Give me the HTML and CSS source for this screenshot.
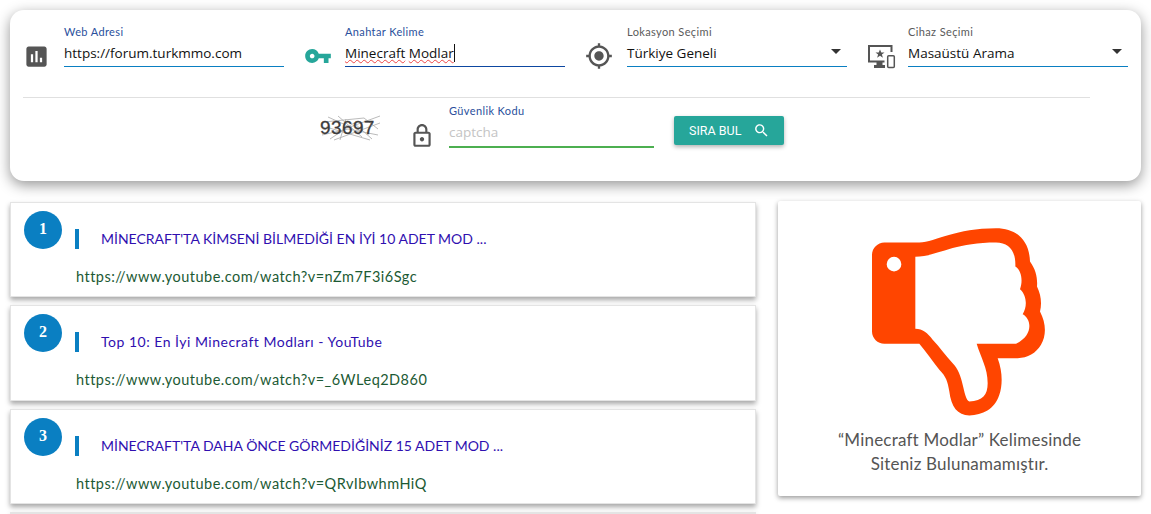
FILE: index.html
```html
<!DOCTYPE html>
<html lang="tr">
<head>
<meta charset="utf-8">
<title>Sıra Bul</title>
<link rel="stylesheet" href="styles.css">
</head>
<body>
<section class="panel">
  <div class="row-fields">
    <div class="field">
      <svg class="ficon" viewBox="0 0 24 24"><path fill="#555" d="M19 3H5c-1.1 0-2 .9-2 2v14c0 1.1.9 2 2 2h14c1.1 0 2-.9 2-2V5c0-1.1-.9-2-2-2zM9 17H7v-7h2v7zm4 0h-2V7h2v10zm4 0h-2v-4h2v4z"/></svg>
      <div class="control">
        <label class="lbl lbl-blue">Web Adresi</label>
        <div class="val line-blue">https://forum.turkmmo.com</div>
      </div>
    </div>
    <div class="field">
      <svg class="ficon ficon-key" viewBox="0 0 24 24"><path fill="#26a69a" d="M12.65 10C11.83 7.67 9.61 6 7 6c-3.31 0-6 2.69-6 6s2.69 6 6 6c2.61 0 4.83-1.67 5.65-4H17v4h4v-4h2v-4H12.65zM7 14c-1.1 0-2-.9-2-2s.9-2 2-2 2 .9 2 2-.9 2-2 2z"/></svg>
      <div class="control">
        <label class="lbl lbl-blue">Anahtar Kelime</label>
        <div class="val line-navy"><span class="squiggle">Minecraft</span> <span class="squiggle">Modlar</span><span class="caret"></span></div>
      </div>
    </div>
    <div class="field">
      <svg class="ficon ficon-gps" viewBox="0 0 24 24"><path fill="#555" d="M12 8c-2.21 0-4 1.79-4 4s1.79 4 4 4 4-1.79 4-4-1.79-4-4-4zm8.94 3c-.46-4.17-3.77-7.48-7.94-7.94V1h-2v2.06C6.83 3.52 3.52 6.83 3.06 11H1v2h2.06c.46 4.17 3.77 7.48 7.94 7.94V23h2v-2.06c4.17-.46 7.48-3.77 7.94-7.94H23v-2h-2.06zM12 19c-3.87 0-7-3.13-7-7s3.13-7 7-7 7 3.13 7 7-3.13 7-7 7z"/></svg>
      <div class="control">
        <label class="lbl">Lokasyon Seçimi</label>
        <div class="val line-blue val-select">Türkiye Geneli<i class="arrow"></i></div>
      </div>
    </div>
    <div class="field">
      <svg class="ficon ficon-dev" viewBox="0 0 30 27"><path fill="none" stroke="#555" stroke-width="2" d="M24.500 9V3H2V18.500H17.500"/><path fill="#555" d="M9.500 19h6v3h2.500v3H7v-3h2.500zM13 6.500l1.300 3h3.200l-2.600 2 1 3.200-2.900-1.900-2.900 1.900 1-3.200-2.600-2h3.200z"/><rect x="20.700" y="12.700" width="6.600" height="11.800" rx="1" fill="none" stroke="#555" stroke-width="1.500"/></svg>
      <div class="control">
        <label class="lbl">Cihaz Seçimi</label>
        <div class="val line-blue val-select">Masaüstü Arama<i class="arrow"></i></div>
      </div>
    </div>
  </div>
  <hr class="divider">
  <div class="row-captcha">
    <div class="captcha">
      <svg class="noise" viewBox="0 0 62 26"><path fill="none" stroke="#aaa" stroke-width=".8" d="M8 2 30 12 60 1M4 7 44 3 58 14M10 24 34 8 52 24M2 20 28 14 58 20M18 1 42 22M14 25 60 8M6 12 50 25M26 4 20 25"/></svg>
      <span class="captcha-text">93697</span>
    </div>
    <svg class="lock" viewBox="0 0 24 24"><path fill="#555" d="M18 8h-1V6c0-2.760-2.240-5-5-5S7 3.240 7 6v2H6c-1.100 0-2 .9-2 2v10c0 1.100.9 2 2 2h12c1.100 0 2-.9 2-2V10c0-1.100-.9-2-2-2zM9 6c0-1.660 1.340-3 3-3s3 1.340 3 3v2H9V6zm9 14H6V10h12v10zm-6-3c1.100 0 2-.9 2-2s-.9-2-2-2-2 .9-2 2 .9 2 2 2z"/></svg>
    <div class="control control-captcha">
      <label class="lbl lbl-blue">Güvenlik Kodu</label>
      <div class="val val-ph line-green">captcha</div>
    </div>
    <button class="btn" type="button">SIRA BUL
      <svg class="btn-icon" viewBox="0 0 24 24"><path fill="#fff" d="M15.500 14h-.79l-.28-.27C15.410 12.590 16 11.110 16 9.500 16 5.910 13.090 3 9.500 3S3 5.910 3 9.500 5.910 16 9.500 16c1.610 0 3.090-.59 4.230-1.570l.27.28v.79l5 4.990L20.490 19l-4.990-5zm-6 0C7.010 14 5 11.990 5 9.500S7.010 5 9.500 5 14 7.010 14 9.500 11.990 14 9.500 14z"/></svg>
    </button>
  </div>
</section>
<main class="results">
  <div class="list">
    <article class="card">
      <div class="rank">1</div>
      <a class="title">MİNECRAFT'TA KİMSENİ BİLMEDİĞİ EN İYİ 10 ADET MOD ...</a>
      <div class="url">https://www.youtube.com/watch?v=nZm7F3i6Sgc</div>
    </article>
    <article class="card">
      <div class="rank">2</div>
      <a class="title title-lower">Top 10: En İyi Minecraft Modları - YouTube</a>
      <div class="url">https://www.youtube.com/watch?v=_6WLeq2D860</div>
    </article>
    <article class="card">
      <div class="rank">3</div>
      <a class="title">MİNECRAFT'TA DAHA ÖNCE GÖRMEDİĞİNİZ 15 ADET MOD ...</a>
      <div class="url">https://www.youtube.com/watch?v=QRvIbwhmHiQ</div>
    </article>
    <article class="card card-stub"></article>
  </div>
  <aside class="verdict">
    <svg class="thumb" viewBox="308 100 525 563"><path fill="#ff4500" fill-rule="evenodd" d="M345 143H450C500 140 560 100 680 100C745 100 780 140 782 200C800 225 805 250 803 275C815 300 818 325 812 350C830 385 832 420 815 450C800 475 775 490 745 490H685C700 530 700 570 690 600C675 645 640 660 600 662C565 662 545 635 540 590C535 560 530 545 510 525C490 500 470 470 450 447H345C325 447 308 430 308 410V180C308 160 325 143 345 143ZM438 186V402C460 402 475 415 490 435C510 455 530 485 550 505C565 520 575 545 580 570C585 590 590 618 600 620C640 618 655 600 655 565C655 520 635 490 622 447H740C795 420 785 370 760 358C775 335 772 300 752 283C762 255 755 225 738 215C740 170 720 143 680 143C550 143 500 186 438 186ZM374 186A22 22 0 1 0 374.100 230A22 22 0 1 0 374 186Z"/></svg>
    <p class="verdict-text">“Minecraft Modlar” Kelimesinde<br>Siteniz Bulunamamıştır.</p>
  </aside>
</main>
</body>
</html>
```
FILE: styles.css
```css
* { box-sizing: border-box; }
html, body { margin: 0; height: 514px; overflow: hidden; }
body {
  background: #fff;
  padding: 10px 10px 0;
  font-family: "Lato", "Open Sans", sans-serif;
}
.panel {
  height: 171px;
  background: #fff;
  border-radius: 14px;
  box-shadow: 0 4px 14px rgba(0,0,0,.42);
  padding: 14px 13px 0 13px;
}
.row-fields { display: flex; }
.field {
  width: 281px;
  display: flex;
  align-items: flex-start;
  flex: none;
}
.ficon { width: 27px; height: 27px; margin: 19px 14px 0 0; flex: none; }
.ficon-key { width: 28px; height: 28px; margin: 18px 13px 0 0; }
.ficon-gps { width: 28px; height: 28px; margin: 18px 14px 0 0; }
.ficon-dev { width: 30px; height: 27px; margin: 19px 11px 0 1px; }
.control { width: 220px; flex: none; }
.lbl { display: block; font-size: 11px; line-height: 16px; letter-spacing: .38px; color: #5a5a5a; }
.lbl-blue { color: #2a4f9c; }
.val {
  position: relative;
  height: 27px;
  padding-top: 3px;
  font-family: "Open Sans", sans-serif;
  font-size: 13.500px;
  line-height: 20px;
  color: #111;
  border-bottom: 1px solid #0a7fc2;
}
.line-navy { border-bottom-color: #0d47a1; }
.line-green { border-bottom: 2px solid #4caf50; }
.val-ph { color: #c4c4c4; height: 29px; }
.squiggle { text-decoration: underline wavy #e44; text-decoration-thickness: 1px; text-underline-offset: 1px; }
.caret { display: inline-block; width: 1px; height: 18px; background: #111; vertical-align: -4px; }
.arrow {
  position: absolute;
  right: 6px;
  top: 9px;
  border-left: 5px solid transparent;
  border-right: 5px solid transparent;
  border-top: 5px solid #333;
}
.divider {
  width: 1067px;
  height: 1px;
  border: 0;
  background: #e0e0e0;
  margin: 27px 0 0 0;
}
.row-captcha {
  display: flex;
  align-items: flex-start;
  margin-top: 5px;
  padding-left: 296px;
}
.captcha { position: relative; width: 62px; height: 26px; margin: 12px 0 0 1px; flex: none; }
.noise { position: absolute; left: 0; top: 0; width: 62px; height: 26px; }
.captcha-text {
  position: relative;
  display: block;
  font-family: "Liberation Sans", sans-serif;
  font-size: 19px;
  line-height: 26px;
  color: #3c3c3c;
  letter-spacing: .4px;
  -webkit-text-stroke: .3px #3c3c3c;
}
.lock { width: 26px; height: 26px; margin: 20px 14px 0 27px; flex: none; }
.control-captcha { width: 205px; flex: none; }
.btn {
  width: 110px;
  height: 29px;
  margin: 13px 0 0 20px;
  flex: none;
  border: 0;
  border-radius: 2px;
  background: #26a69a;
  color: #fff;
  font-family: "Roboto", sans-serif;
  font-size: 12.500px;
  font-weight: 400;
  box-shadow: 0 2px 4px rgba(0,0,0,.3);
  display: flex;
  align-items: center;
  padding: 0 0 0 15px;
}
.btn-icon { width: 17px; height: 17px; margin-left: 12px; }
.results { display: flex; align-items: flex-start; margin-top: 20px; gap: 22px; }
.list { width: 746px; flex: none; display: flex; flex-direction: column; gap: 8px; margin-top: 1px; }
.card {
  position: relative;
  height: 95.330px;
  background: #fff;
  border: 1px solid #e4e4e4;
  box-shadow: 0 3px 5px rgba(0,0,0,.35);
  padding: 26px 0 0 64px;
}
.card-stub { height: 2px; padding: 0; }
.rank {
  position: absolute;
  left: 13px;
  top: 8px;
  width: 38px;
  height: 38px;
  border-radius: 50%;
  background: #0a7fc2;
  color: #fff;
  font-family: "Liberation Serif", serif;
  font-weight: 700;
  font-size: 16px;
  line-height: 36px;
  text-align: center;
}
.title {
  display: block;
  height: 20px;
  border-left: 4px solid #0a7fc2;
  padding-left: 22px;
  font-size: 14px;
  line-height: 20px;
  color: #300fb0;
  white-space: nowrap;
}
.title-lower { letter-spacing: .5px; }
.url {
  margin: 18px 0 0 1px;
  font-size: 14.500px;
  line-height: 20px;
  color: #1c5a34;
  letter-spacing: .48px;
}
.verdict {
  width: 363px;
  height: 295px;
  flex: none;
  background: #fff;
  border-radius: 2px;
  box-shadow: 0 2px 5px rgba(0,0,0,.4);
  display: flex;
  flex-direction: column;
  align-items: center;
  padding-top: 27px;
}
.thumb { width: 175px; height: 188px; flex: none; }
.verdict-text {
  margin: 12px 0 0;
  font-size: 17px;
  line-height: 24px;
  letter-spacing: .2px;
  text-align: center;
  color: #555;
}
```
